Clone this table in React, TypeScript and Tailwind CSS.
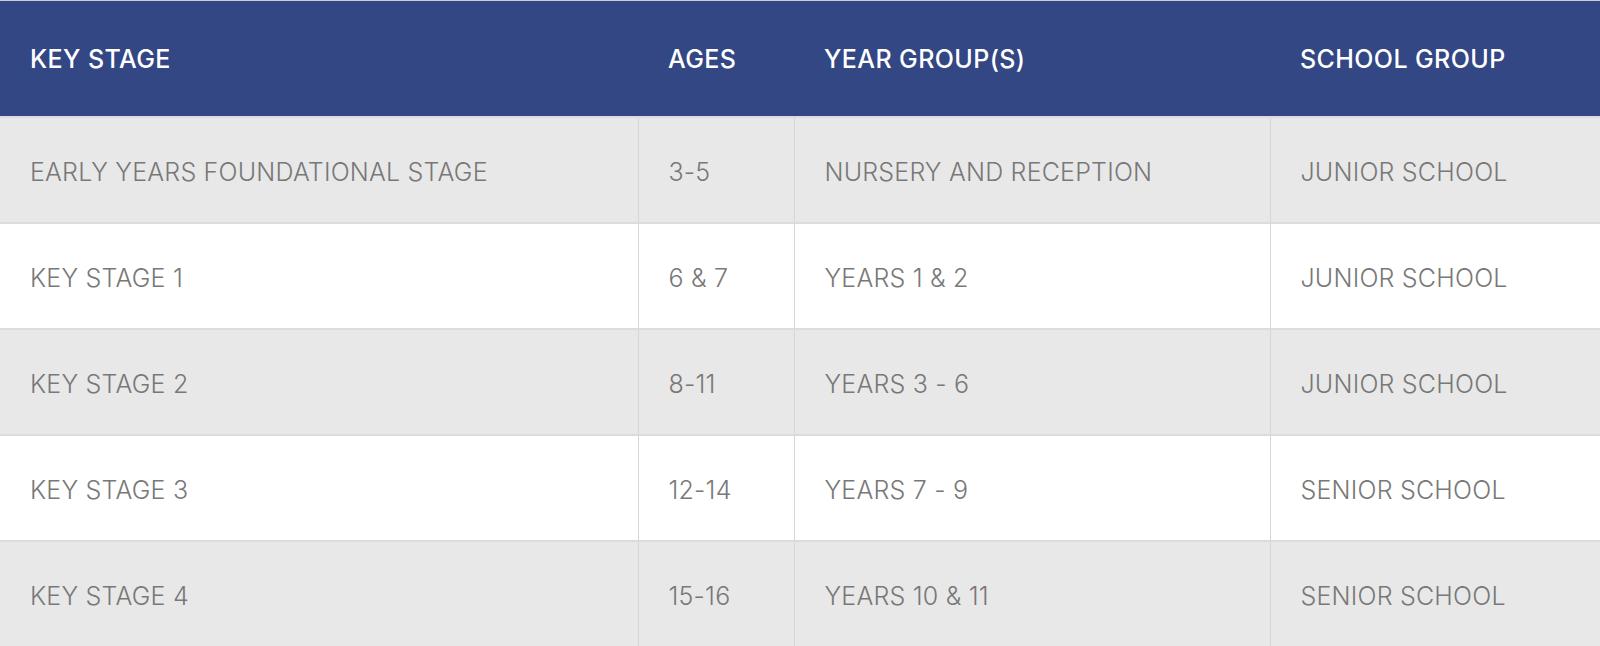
const ROWS = [
  { stage: "EARLY YEARS FOUNDATIONAL STAGE", ages: "3-5", years: "NURSERY AND RECEPTION", group: "JUNIOR SCHOOL" },
  { stage: "KEY STAGE 1", ages: "6 & 7", years: "YEARS 1 & 2", group: "JUNIOR SCHOOL" },
  { stage: "KEY STAGE 2", ages: "8-11", years: "YEARS 3 - 6", group: "JUNIOR SCHOOL" },
  { stage: "KEY STAGE 3", ages: "12-14", years: "YEARS 7 - 9", group: "SENIOR SCHOOL" },
  { stage: "KEY STAGE 4", ages: "15-16", years: "YEARS 10 & 11", group: "SENIOR SCHOOL" },
];

const HEADERS = ["KEY STAGE", "AGES", "YEAR GROUP(S)", "SCHOOL GROUP"];

export default function App() {
  return (
    <div className="w-[1600px] h-[646px] overflow-hidden bg-white font-['Inter',sans-serif]">
      <table className="w-full border-collapse table-fixed">
        <colgroup>
          <col className="w-[638px]" />
          <col className="w-[156px]" />
          <col className="w-[476px]" />
          <col className="w-[330px]" />
        </colgroup>
        <thead>
          <tr className="h-[116px] bg-[#334785] border-t border-[#c9ccd6]">
            {HEADERS.map((h) => (
              <th
                key={h}
                className="px-[30px] pt-[2px] text-left align-middle text-[25px] font-medium text-white tracking-[0.4px]"
              >
                {h}
              </th>
            ))}
          </tr>
        </thead>
        <tbody>
          {ROWS.map((r, i) => (
            <tr
              key={r.stage}
              className={`h-[106px] border-t-2 border-[#dcdcdc] ${i % 2 === 0 ? "bg-[#e8e8e8]" : "bg-white"}`}
            >
              {[r.stage, r.ages, r.years, r.group].map((c, j) => (
                <td
                  key={j}
                  className={`px-[30px] pt-[6px] align-middle text-[25px] font-light text-[#787878] tracking-[0.2px] ${j > 0 ? "border-l border-[#d6d6d6]" : ""}`}
                >
                  {c}
                </td>
              ))}
            </tr>
          ))}
        </tbody>
      </table>
    </div>
  );
}
